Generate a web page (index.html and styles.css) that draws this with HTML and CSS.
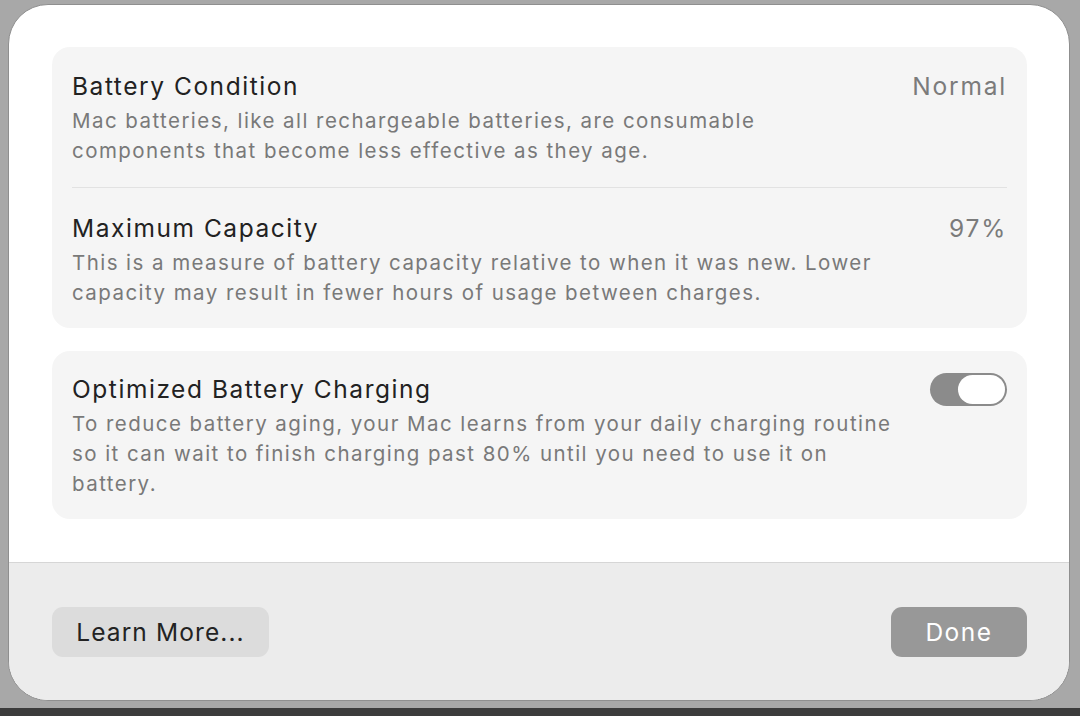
FILE: index.html
```html
<!DOCTYPE html>
<html>
<head>
<meta charset="utf-8">
<link rel="stylesheet" href="styles.css">
</head>
<body>
<div class="desk">
  <div class="dialog">
    <div class="content">
      <section class="card">
        <div class="row">
          <div class="text">
            <div class="title">Battery Condition</div>
            <div class="desc">Mac batteries, like all rechargeable batteries, are consumable<br>components that become less effective as they age.</div>
          </div>
          <div class="value">Normal</div>
        </div>
        <div class="sep"></div>
        <div class="row row2">
          <div class="text">
            <div class="title">Maximum Capacity</div>
            <div class="desc">This is a measure of battery capacity relative to when it was new. Lower<br>capacity may result in fewer hours of usage between charges.</div>
          </div>
          <div class="value">97%</div>
        </div>
      </section>
      <section class="card card2">
        <div class="row">
          <div class="text">
            <div class="title">Optimized Battery Charging</div>
            <div class="desc">To reduce battery aging, your Mac learns from your daily charging routine<br>so it can wait to finish charging past 80% until you need to use it on<br>battery.</div>
          </div>
          <div class="toggle"><div class="knob"></div></div>
        </div>
      </section>
    </div>
    <div class="footer">
      <button class="btn learn">Learn More...</button>
      <button class="btn done">Done</button>
    </div>
  </div>
</div>
</body>
</html>
```
FILE: styles.css
```css
html, body {
  margin: 0;
  padding: 0;
  width: 1080px;
  height: 716px;
  overflow: hidden;
}
body {
  background: #3c3c3c;
  font-family: Inter, "Noto Sans", sans-serif;
}
.desk {
  height: 708px;
  background: #a8a8a8;
  padding: 4px 10px 0 8px;
  box-sizing: border-box;
}
.dialog {
  width: 1062px;
  height: 697px;
  box-sizing: border-box;
  background: #ffffff;
  border: 1px solid #8f8f8f;
  border-radius: 40px;
  overflow: hidden;
  display: flex;
  flex-direction: column;
}
.content {
  padding: 42px 42px 0 43px;
  display: flex;
  flex-direction: column;
  gap: 23px;
}
.card {
  background: #f5f5f5;
  border-radius: 18px;
  padding: 24px 20px 20px 20px;
}
.card2 {
  padding-top: 23px;
  padding-bottom: 20px;
}
.row {
  display: flex;
  justify-content: space-between;
  align-items: flex-start;
}
.title {
  font-size: 24.5px;
  line-height: 30px;
  color: #222222;
  letter-spacing: 1.55px;
}
.desc {
  margin-top: 5px;
  font-size: 20.5px;
  line-height: 30px;
  color: #797979;
  letter-spacing: 1.44px;
}
.value {
  font-size: 24.5px;
  line-height: 30px;
  color: #7b7b7b;
  letter-spacing: 1.8px;
}
.sep {
  height: 1px;
  background: #e2e2e2;
  margin: 21px 0 25px 0;
}
.toggle {
  width: 77px;
  height: 33px;
  margin-top: -1px;
  border-radius: 17px;
  background: #8b8b8b;
  box-sizing: border-box;
  padding: 2px;
  display: flex;
  justify-content: flex-end;
}
.knob {
  width: 47px;
  height: 29px;
  border-radius: 15px;
  background: #ffffff;
}
.footer {
  margin-top: 43px;
  border-top: 1px solid #d6d6d6;
  background: #ececec;
  flex: 1;
  display: flex;
  justify-content: space-between;
  align-items: center;
  padding: 0 42px 0 43px;
}
.btn {
  height: 50px;
  border: none;
  border-radius: 11px;
  font-family: Inter, "Noto Sans", sans-serif;
  font-size: 24.5px;
  padding: 0;
}
.learn {
  width: 217px;
  background: #dcdcdc;
  color: #232323;
  letter-spacing: 1.1px;
}
.done {
  width: 136px;
  background: #989898;
  color: #ffffff;
  letter-spacing: 1.5px;
}
```
